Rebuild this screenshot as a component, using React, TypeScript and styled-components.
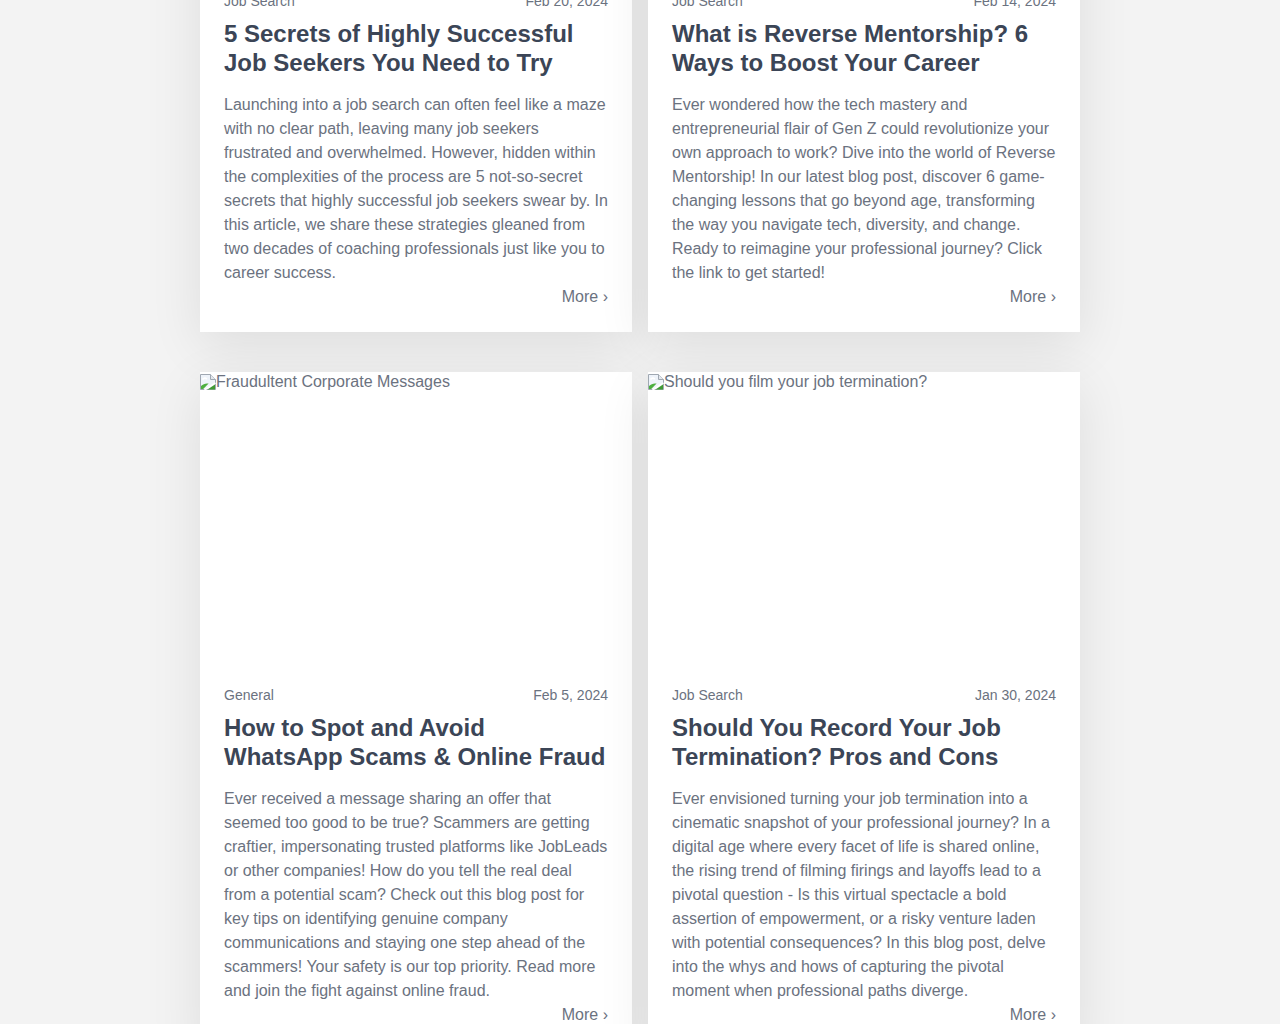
import React from "react";
import styled, { createGlobalStyle } from "styled-components";

const GlobalStyle = createGlobalStyle`
  html, body {
    margin: 0;
    padding: 0;
    background: #f3f3f3;
    font-family: "Liberation Sans", Arial, Helvetica, sans-serif;
  }
  * { box-sizing: border-box; }
`;

const Page = styled.main`
  width: 880px;
  margin: -322px auto 0;
  padding-bottom: 60px;
`;

const Grid = styled.div`
  display: grid;
  grid-template-columns: repeat(2, 432px);
  column-gap: 16px;
  row-gap: 40px;
`;

const Card = styled.article`
  display: flex;
  flex-direction: column;
  background: #ffffff;
  box-shadow: 0 14px 50px rgba(0, 0, 0, 0.09);
`;

const ImageBox = styled.div`
  height: 288px;
  display: flex;
  align-items: flex-start;
  color: #6b7280;
  font-size: 16px;
  line-height: 20px;
`;

const BrokenIcon = styled.svg`
  width: 16px;
  height: 16px;
  margin-top: 2px;
  flex: none;
`;

const Body = styled.div`
  flex: 1;
  display: flex;
  flex-direction: column;
  padding: 24px 24px 23px;
`;

const Meta = styled.div`
  display: flex;
  justify-content: space-between;
  font-size: 14px;
  line-height: 22px;
  color: #6b7280;
`;

const Title = styled.h2`
  margin: 7px 0 0;
  font-size: 24px;
  line-height: 29px;
  font-weight: 700;
  color: #3b4556;
`;

const Excerpt = styled.p`
  margin: 16px 0 0;
  font-size: 16px;
  line-height: 24px;
  color: #6b7280;
  flex: 1;
`;

const More = styled.a`
  align-self: flex-end;
  font-size: 16px;
  line-height: 24px;
  color: #6b7280;
  text-decoration: none;
`;

type Post = {
  alt: string;
  category: string;
  date: string;
  title: string;
  excerpt: string;
};

const posts: Post[] = [
  {
    alt: "5 Secrets of Highly Successful Job Seekers",
    category: "Job Search",
    date: "Feb 20, 2024",
    title: "5 Secrets of Highly Successful Job Seekers You Need to Try",
    excerpt:
      "Launching into a job search can often feel like a maze with no clear path, leaving many job seekers frustrated and overwhelmed. However, hidden within the complexities of the process are 5 not-so-secret secrets that highly successful job seekers swear by. In this article, we share these strategies gleaned from two decades of coaching professionals just like you to career success.",
  },
  {
    alt: "Reverse Mentorship",
    category: "Job Search",
    date: "Feb 14, 2024",
    title: "What is Reverse Mentorship? 6 Ways to Boost Your Career",
    excerpt:
      "Ever wondered how the tech mastery and entrepreneurial flair of Gen Z could revolutionize your own approach to work? Dive into the world of Reverse Mentorship! In our latest blog post, discover 6 game-changing lessons that go beyond age, transforming the way you navigate tech, diversity, and change. Ready to reimagine your professional journey? Click the link to get started!",
  },
  {
    alt: "Fraudultent Corporate Messages",
    category: "General",
    date: "Feb 5, 2024",
    title: "How to Spot and Avoid WhatsApp Scams & Online Fraud",
    excerpt:
      "Ever received a message sharing an offer that seemed too good to be true? Scammers are getting craftier, impersonating trusted platforms like JobLeads or other companies! How do you tell the real deal from a potential scam? Check out this blog post for key tips on identifying genuine company communications and staying one step ahead of the scammers! Your safety is our top priority. Read more and join the fight against online fraud.",
  },
  {
    alt: "Should you film your job termination?",
    category: "Job Search",
    date: "Jan 30, 2024",
    title: "Should You Record Your Job Termination? Pros and Cons",
    excerpt:
      "Ever envisioned turning your job termination into a cinematic snapshot of your professional journey? In a digital age where every facet of life is shared online, the rising trend of filming firings and layoffs lead to a pivotal question - Is this virtual spectacle a bold assertion of empowerment, or a risky venture laden with potential consequences? In this blog post, delve into the whys and hows of capturing the pivotal moment when professional paths diverge.",
  },
];

const Broken = () => (
  <BrokenIcon viewBox="0 0 16 16" aria-hidden="true">
    <path d="M0.5 0.5h10l5 5v10h-15z" fill="#eef3fa" stroke="#a0a8b2" />
    <path d="M10.5 0.5v5h5" fill="#e3e7ec" stroke="#a0a8b2" />
    <path d="M2.5 5.5c1.2-1.4 3-1.6 4.4-0.4" fill="none" stroke="#ffffff" strokeWidth="1.6" />
    <path d="M1 15V12c2.2-2.2 5-3 7.6-2.4L3.2 15z" fill="#4caf3f" />
    <path d="M15.5 9L4.5 16" stroke="#ffffff" strokeWidth="1.6" />
    <path d="M7.5 15.5h7.5V10.5z" fill="#3f9a34" />
  </BrokenIcon>
);

export default function App() {
  return (
    <>
      <GlobalStyle />
      <Page>
        <Grid>
          {posts.map((p) => (
            <Card key={p.title}>
              <ImageBox role="img" aria-label={p.alt}>
                <Broken />
                <span>{p.alt}</span>
              </ImageBox>
              <Body>
                <Meta>
                  <span>{p.category}</span>
                  <span>{p.date}</span>
                </Meta>
                <Title>{p.title}</Title>
                <Excerpt>{p.excerpt}</Excerpt>
                <More href="#">More ›</More>
              </Body>
            </Card>
          ))}
        </Grid>
      </Page>
    </>
  );
}
